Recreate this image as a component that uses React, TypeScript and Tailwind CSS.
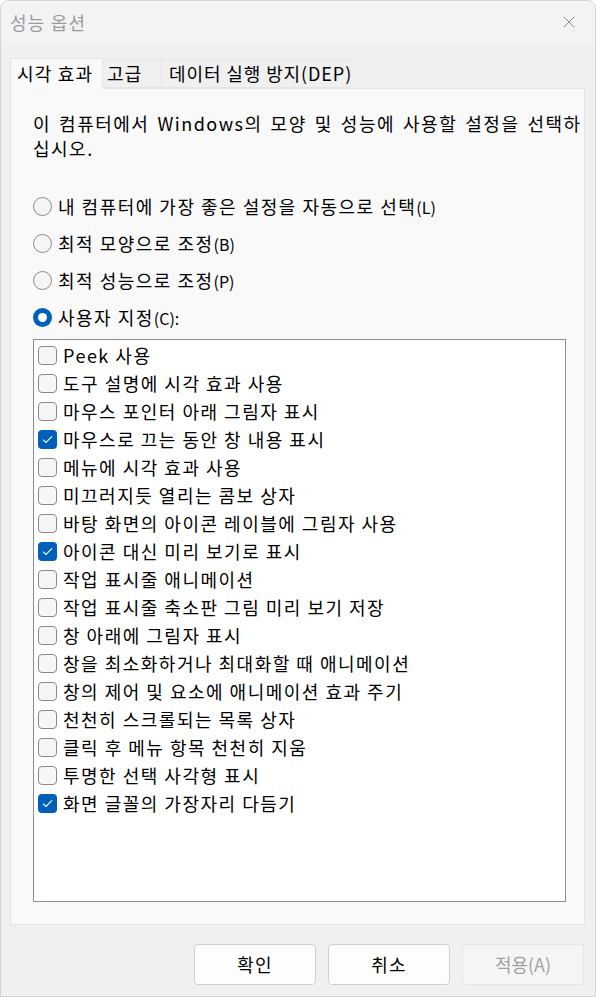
import { X } from "lucide-react";

const items: { label: string; checked?: boolean }[] = [
  { label: "Peek 사용" },
  { label: "도구 설명에 시각 효과 사용" },
  { label: "마우스 포인터 아래 그림자 표시" },
  { label: "마우스로 끄는 동안 창 내용 표시", checked: true },
  { label: "메뉴에 시각 효과 사용" },
  { label: "미끄러지듯 열리는 콤보 상자" },
  { label: "바탕 화면의 아이콘 레이블에 그림자 사용" },
  { label: "아이콘 대신 미리 보기로 표시", checked: true },
  { label: "작업 표시줄 애니메이션" },
  { label: "작업 표시줄 축소판 그림 미리 보기 저장" },
  { label: "창 아래에 그림자 표시" },
  { label: "창을 최소화하거나 최대화할 때 애니메이션" },
  { label: "창의 제어 및 요소에 애니메이션 효과 주기" },
  { label: "천천히 스크롤되는 목록 상자" },
  { label: "클릭 후 메뉴 항목 천천히 지움" },
  { label: "투명한 선택 사각형 표시" },
  { label: "화면 글꼴의 가장자리 다듬기", checked: true },
];

const radios = [
  { label: "내 컴퓨터에 가장 좋은 설정을 자동으로 선택", key: "(L)" },
  { label: "최적 모양으로 조정", key: "(B)" },
  { label: "최적 성능으로 조정", key: "(P)" },
  { label: "사용자 지정", key: "(C):", selected: true },
];

function Radio({ selected }: { selected?: boolean }) {
  if (selected)
    return (
      <span className="w-[19px] h-[19px] rounded-full bg-[#005fb8] flex items-center justify-center shrink-0">
        <span className="w-[9px] h-[9px] rounded-full bg-white" />
      </span>
    );
  return <span className="w-[19px] h-[19px] rounded-full border border-[#8a8a8a] bg-[#f5f5f5] shrink-0" />;
}

function Check({ checked }: { checked?: boolean }) {
  if (checked)
    return (
      <span className="w-[19px] h-[19px] rounded-[4px] bg-[#005fb8] flex items-center justify-center shrink-0">
        <svg width="11" height="9" viewBox="0 0 11 9" fill="none">
          <path d="M1 4.6 L4 7.4 L10 1.4" stroke="white" strokeWidth="1.1" />
        </svg>
      </span>
    );
  return <span className="w-[19px] h-[19px] rounded-[4px] border border-[#8a8a8a] bg-[#f6f6f6] shrink-0" />;
}

export default function App() {
  return (
    <div className="w-[596px] h-[997px] bg-white font-['Noto_Sans_CJK_KR',sans-serif] text-black text-[18px] tracking-[1.5px]">
      <div className="w-full h-full rounded-t-[8px] border border-[#d4d4d4] bg-[#f0f0f0] flex flex-col overflow-hidden">
        <div className="h-[42px] bg-[#f3f3f3] flex items-center justify-between pl-[9px] pr-[16px] shrink-0">
          <span className="text-[#9b9b9b] tracking-[1.2px]">성능 옵션</span>
          <X size={20} strokeWidth={1.2} className="text-[#8a8a8a]" />
        </div>
        <div className="flex flex-col px-[9px] pt-[14px]">
          <div className="flex items-end h-[31px] tracking-[1.2px]">
            <div className="h-[31px] w-[93px] pl-[6px] bg-[#f9f9f9] border border-b-0 border-[#e5e5e5] flex items-center relative z-10 -mb-px pb-px whitespace-nowrap">
              시각 효과
            </div>
            <div className="h-[29px] w-[59px] pl-[4px] border border-l-0 border-[#e5e5e5] flex items-center">
              고급
            </div>
            <div className="h-[29px] w-[189px] pl-[7px] border border-l-0 border-[#e5e5e5] flex items-center whitespace-nowrap tracking-[0.9px]">
              데이터 실행 방지(DEP)
            </div>
          </div>
          <div className="h-[837px] w-[575px] bg-[#f9f9f9] border border-[#e5e5e5] flex flex-col pl-[22px] pr-[10px]">
            <p className="mt-[22px] leading-[25px] w-[558px] shrink-0 [word-spacing:2.5px]">
              이 컴퓨터에서 Windows의 모양 및 성능에 사용할 설정을 선택하십시오.
            </p>
            <div className="mt-[36px] flex flex-col gap-[18px]">
              {radios.map((r) => (
                <div key={r.label} className="flex items-center gap-[6px] h-[19px]">
                  <Radio selected={r.selected} />
                  <span className="whitespace-nowrap">
                    {r.label}
                    <span className="text-[16px] tracking-normal">{r.key}</span>
                  </span>
                </div>
              ))}
            </div>
            <div className="mt-[12px] w-[533px] h-[563px] bg-white border border-[#8a8b9b] pt-[1px] pl-[4px]">
              {items.map((it) => (
                <div key={it.label} className="h-[28px] flex items-center gap-[6px]">
                  <Check checked={it.checked} />
                  <span className="whitespace-nowrap">{it.label}</span>
                </div>
              ))}
            </div>
          </div>
        </div>
        <div className="flex justify-end gap-[12px] pr-[11px] pt-[19px] tracking-[1.2px]">
          <button className="w-[122px] h-[41px] rounded-[4px] bg-[#fdfdfd] border border-[#d0d0d0]">확인</button>
          <button className="w-[122px] h-[41px] rounded-[4px] bg-[#fdfdfd] border border-[#d0d0d0]">취소</button>
          <button className="w-[122px] h-[41px] rounded-[4px] bg-[#f5f5f5] border border-[#e5e5e5] text-[#a0a0a0] tracking-normal">적용(A)</button>
        </div>
      </div>
    </div>
  );
}
